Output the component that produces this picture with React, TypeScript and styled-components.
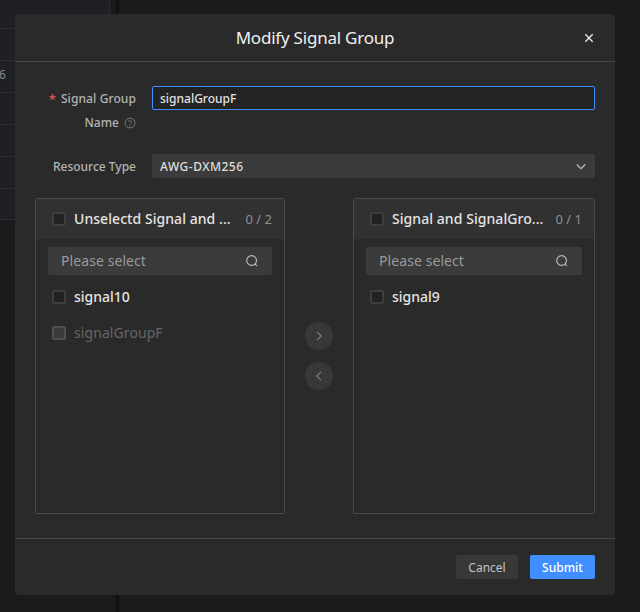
import React from "react";
import styled, { createGlobalStyle } from "styled-components";

const GlobalStyle = createGlobalStyle`
  *, *::before, *::after { box-sizing: border-box; }
  body {
    margin: 0;
    background: #1b1b1d;
    color: #e6e6e6;
    font-family: "Noto Sans", "Open Sans", sans-serif;
    font-size: 12px;
    overflow: hidden;
  }
  button, input { font: inherit; margin: 0; }
`;

const Page = styled.div`
  position: relative;
  height: 612px;
  overflow: hidden;
`;

const Backdrop = styled.div`
  display: flex;
  height: 100%;
`;

const SideTable = styled.div`
  width: 110px;
  height: 220px;
  background: #1f2024;
  border-right: 1px solid #2d2e31;
`;

const SideRow = styled.div<{ $height: number }>`
  height: ${(p) => p.$height}px;
  line-height: 27px;
  border-bottom: 1px solid #2b2c30;
  color: #808184;
  font-size: 12px;
  font-weight: 500;
  text-indent: -1px;
`;

const Splitter = styled.div`
  width: 3px;
  margin-left: 6px;
  background: #111113;
`;

const Dialog = styled.section`
  position: absolute;
  top: 14px;
  left: 15px;
  width: 600px;
  height: 581px;
  display: flex;
  flex-direction: column;
  background: #2a2a2a;
  border-radius: 4px;
`;

const Header = styled.header`
  display: grid;
  grid-template-columns: 52px 1fr 52px;
  align-items: center;
  height: 48px;
  border-bottom: 1px solid #4a4a4a;
`;

const Title = styled.h1`
  grid-column: 2;
  margin: 0;
  text-align: center;
  font-size: 17px;
  letter-spacing: -0.22px;
  line-height: 24px;
  font-weight: 400;
  color: #f0f0f0;
  white-space: nowrap;
`;

const CloseButton = styled.button`
  display: flex;
  justify-content: center;
  padding: 0;
  border: 0;
  background: none;
  color: #e8e8e8;
`;

const Body = styled.div`
  flex: 1;
  padding: 24px 20px 0;
`;

const FormRow = styled.div`
  display: grid;
  grid-template-columns: 101px 443px;
  column-gap: 16px;
  align-items: start;
  margin-bottom: 20px;
`;

const Label = styled.label`
  height: 100%;
  font-weight: 500;
  color: #b4b4b4;
  white-space: nowrap;
`;

const LabelLine = styled.span`
  display: flex;
  align-items: center;
  justify-content: flex-end;
  height: 24px;
  padding-top: 2px;
  line-height: 22px;
`;

const Required = styled.span`
  margin-right: 5px;
  color: #e05a55;
  font-size: 13px;
`;

const HelpIcon = styled.svg`
  margin-left: 5px;
  color: #777;
`;

const TextInput = styled.input`
  width: 100%;
  height: 24px;
  padding: 0 7px;
  border: 1px solid #408eff;
  border-radius: 2px;
  outline: none;
  background: #232323;
  color: #e2e2e2;
  font-weight: 500;
`;

const Select = styled.div`
  display: flex;
  align-items: center;
  justify-content: space-between;
  height: 24px;
  padding: 0 8px;
  border-radius: 2px;
  background: #3b3b3b;
  color: #dedede;
  font-weight: 500;
`;

const Transfer = styled.div`
  display: grid;
  grid-template-columns: 250px 68px 242px;
  height: 316px;
`;

const Panel = styled.div`
  min-width: 0;
  border: 1px solid #4a4a4a;
  border-radius: 2px;
`;

const PanelHeader = styled.div`
  display: flex;
  align-items: center;
  height: 40px;
  padding: 0 12px 0 16px;
  background: #313131;
`;

const Check = styled.span<{ $disabled?: boolean }>`
  flex: none;
  width: 14px;
  height: 14px;
  margin-right: 8px;
  border: 2px solid ${(p) => (p.$disabled ? "#505050" : "#3e3e3e")};
  border-radius: 2px;
  background: ${(p) => (p.$disabled ? "#3b3b3b" : "#222222")};
`;

const Text = styled.span<{ $spacing?: number }>`
  letter-spacing: ${(p) => p.$spacing ?? 0}px;
  white-space: nowrap;
`;

const ListText = styled(Text)`
  padding-bottom: 2px;
`;

const PanelTitle = styled(ListText)`
  flex: none;
  font-size: 14px;
  font-weight: 500;
  color: #e4e4e4;
`;

const Count = styled.span`
  margin-left: auto;
  color: #8f8f8f;
  font-size: 13px;
  white-space: nowrap;
`;

const Search = styled.div`
  display: flex;
  align-items: center;
  justify-content: space-between;
  height: 28px;
  margin: 8px 12px 4px;
  padding: 0 13px;
  border-radius: 2px;
  background: #3b3b3b;
  color: #9a9a9a;
  font-size: 14px;
`;

const Item = styled.div<{ $disabled?: boolean }>`
  display: flex;
  align-items: center;
  height: 36px;
  padding-left: 16px;
  font-size: 14px;
  font-weight: ${(p) => (p.$disabled ? 400 : 500)};
  color: ${(p) => (p.$disabled ? "#666666" : "#e4e4e4")};
`;

const Movers = styled.div`
  display: flex;
  flex-direction: column;
  align-items: center;
  gap: 12px;
  padding-top: 124px;
`;

const MoveButton = styled.button`
  display: flex;
  align-items: center;
  justify-content: center;
  width: 28px;
  height: 28px;
  padding: 0;
  border: 0;
  border-radius: 50%;
  background: #383838;
  color: #7c7c7c;
`;

const Footer = styled.footer`
  display: flex;
  justify-content: flex-end;
  gap: 12px;
  height: 57px;
  padding: 16px 20px 0;
  border-top: 1px solid #4a4a4a;
`;

const Button = styled.button<{ $primary?: boolean }>`
  width: ${(p) => (p.$primary ? 65 : 62)}px;
  height: 24px;
  padding: 2px 0 0;
  border: 0;
  border-radius: 2px;
  background: ${(p) => (p.$primary ? "#408eff" : "#383838")};
  color: ${(p) => (p.$primary ? "#ffffff" : "#c4c4c4")};
  font-weight: ${(p) => (p.$primary ? 500 : 400)};
  line-height: 22px;
`;

const stroke = {
  fill: "none",
  stroke: "currentColor",
} as const;

const SearchIcon = () => (
  <svg width="14" height="14" viewBox="0 0 14 14" {...stroke} color="#bdbdbd">
    <circle cx="6.6" cy="6.5" r="4.9" strokeWidth="1.1" />
    <path d="M10 10.2 12 12.2" strokeWidth="1.1" />
  </svg>
);

interface ListEntry {
  name: string;
  disabled?: boolean;
}

interface TransferPanelProps {
  title: string;
  count: string;
  items: ListEntry[];
}

const TransferPanel = ({ title, count, items }: TransferPanelProps) => (
  <Panel>
    <PanelHeader>
      <Check />
      <PanelTitle $spacing={0.06}>{title}</PanelTitle>
      <Count>{count}</Count>
    </PanelHeader>
    <Search>
      <ListText $spacing={0.08}>Please select</ListText>
      <SearchIcon />
    </Search>
    {items.map((item) => (
      <Item key={item.name} $disabled={item.disabled}>
        <Check $disabled={item.disabled} />
        <ListText $spacing={item.disabled ? 0.08 : 0}>{item.name}</ListText>
      </Item>
    ))}
  </Panel>
);

const sideRows = [
  { height: 29 },
  { height: 32 },
  { height: 32, text: "6" },
  { height: 32 },
  { height: 32 },
  { height: 32 },
  { height: 31 },
];

export default function App() {
  return (
    <>
      <GlobalStyle />
      <Page>
        <Backdrop>
          <SideTable>
            {sideRows.map((row, i) => (
              <SideRow key={i} $height={row.height}>
                {row.text}
              </SideRow>
            ))}
          </SideTable>
          <Splitter />
        </Backdrop>
        <Dialog role="dialog">
          <Header>
            <Title>Modify Signal Group</Title>
            <CloseButton aria-label="Close">
              <svg width="10" height="10" viewBox="0 0 10 10" {...stroke} strokeWidth="1.4">
                <path d="M1.3 1.3 8.7 8.7M8.7 1.3 1.3 8.7" />
              </svg>
            </CloseButton>
          </Header>
          <Body>
            <FormRow>
              <Label>
                <LabelLine>
                  <Required>*</Required>
                  <Text $spacing={0.1}>Signal Group</Text>
                </LabelLine>
                <LabelLine>
                  <Text>Name</Text>
                  <HelpIcon width="12" height="12" viewBox="0 0 12 12" {...stroke}>
                    <circle cx="6" cy="6" r="4.9" />
                    <path d="M4.4 4.9a1.6 1.5 0 1 1 2.5 1.2C6.3 6.5 6 6.7 6 7.4M6 8.2v1" />
                  </HelpIcon>
                </LabelLine>
              </Label>
              <TextInput defaultValue="signalGroupF" spellCheck={false} />
            </FormRow>
            <FormRow>
              <Label>
                <LabelLine>
                  <Text>Resource Type</Text>
                </LabelLine>
              </Label>
              <Select>
                <Text $spacing={0.5}>AWG-DXM256</Text>
                <svg width="12" height="12" viewBox="0 0 12 12" {...stroke} color="#c0c0c0">
                  <path d="M1.8 4.5 6 8.7 10.2 4.5" strokeWidth="1.1" />
                </svg>
              </Select>
            </FormRow>
            <Transfer>
              <TransferPanel
                title="Unselectd Signal and ..."
                count="0 / 2"
                items={[{ name: "signal10" }, { name: "signalGroupF", disabled: true }]}
              />
              <Movers>
                <MoveButton aria-label="Move right">
                  <svg width="12" height="12" viewBox="0 0 12 12" {...stroke} strokeWidth="1.2">
                    <path d="M4 1.8 8.2 6 4 10.2" />
                  </svg>
                </MoveButton>
                <MoveButton aria-label="Move left">
                  <svg width="12" height="12" viewBox="0 0 12 12" {...stroke} strokeWidth="1.2">
                    <path d="M8 1.8 3.8 6 8 10.2" />
                  </svg>
                </MoveButton>
              </Movers>
              <TransferPanel
                title="Signal and SignalGro..."
                count="0 / 1"
                items={[{ name: "signal9" }]}
              />
            </Transfer>
          </Body>
          <Footer>
            <Button>Cancel</Button>
            <Button $primary>Submit</Button>
          </Footer>
        </Dialog>
      </Page>
    </>
  );
}
